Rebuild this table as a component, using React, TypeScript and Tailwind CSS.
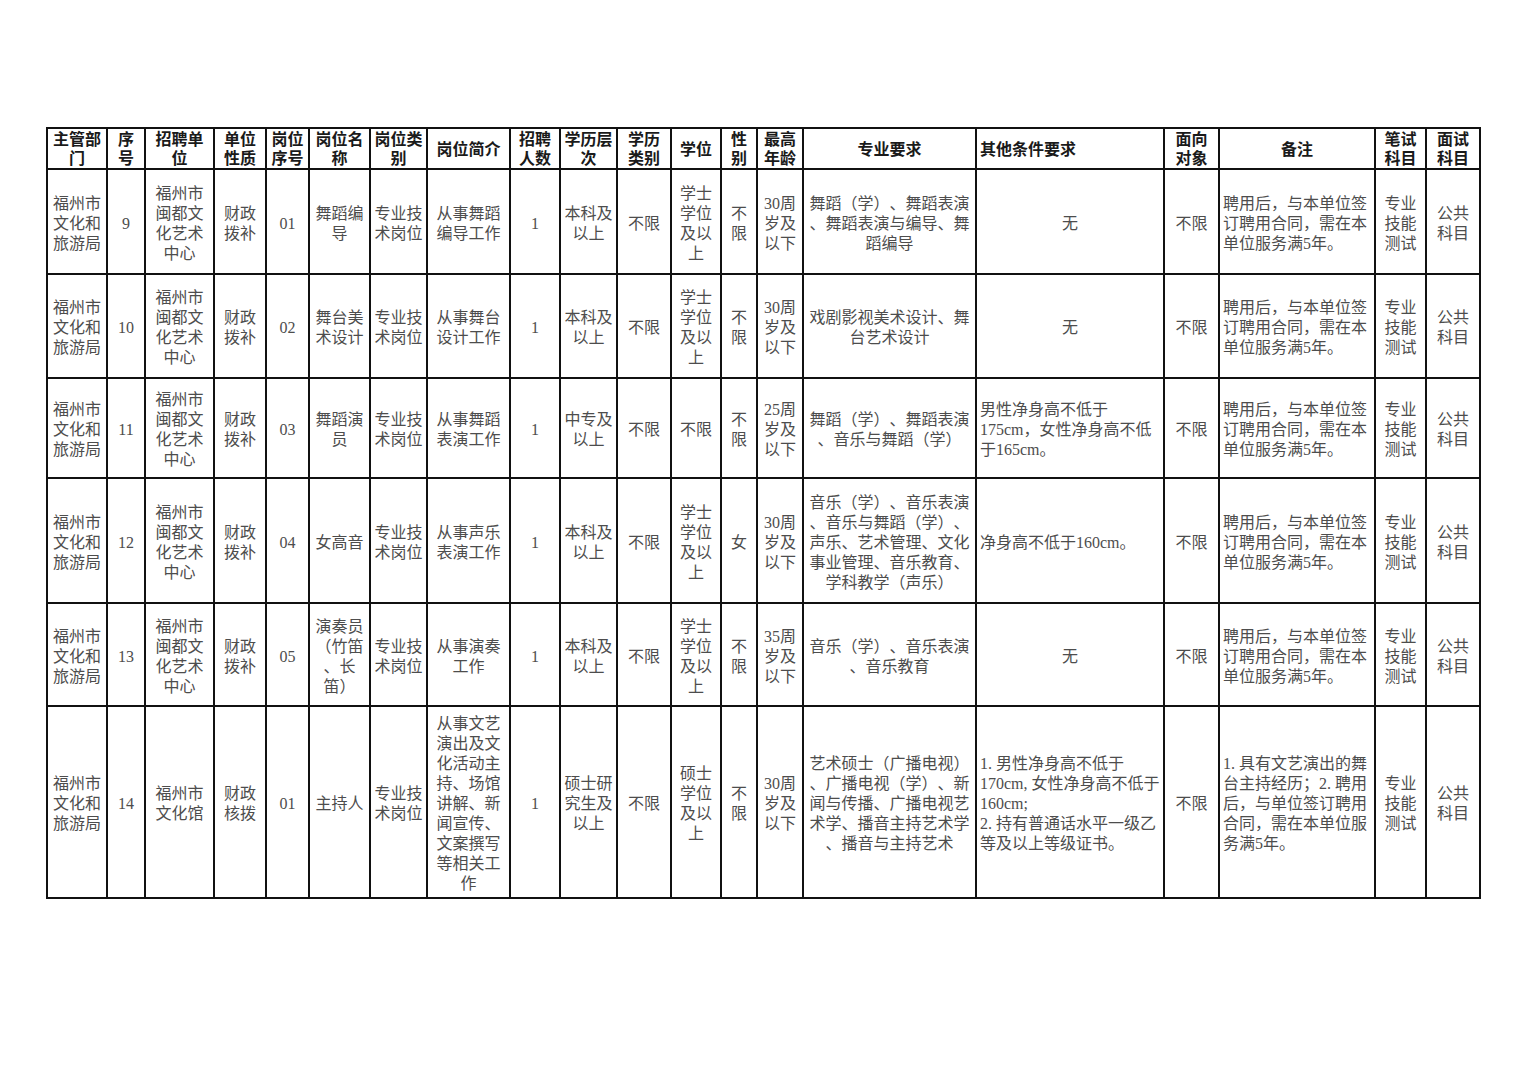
type Cell = { t: string[]; left?: boolean };

const widths = [60, 38, 69, 52, 43, 61, 57, 83, 50, 57, 54, 50, 36, 46, 173, 188, 55, 156, 51, 54];

const headers: Cell[] = [
  { t: ['主管部', '门'] },
  { t: ['序', '号'] },
  { t: ['招聘单', '位'] },
  { t: ['单位', '性质'] },
  { t: ['岗位', '序号'] },
  { t: ['岗位名', '称'] },
  { t: ['岗位类', '别'] },
  { t: ['岗位简介'] },
  { t: ['招聘', '人数'] },
  { t: ['学历层', '次'] },
  { t: ['学历', '类别'] },
  { t: ['学位'] },
  { t: ['性', '别'] },
  { t: ['最高', '年龄'] },
  { t: ['专业要求'] },
  { t: ['其他条件要求'], left: true },
  { t: ['面向', '对象'] },
  { t: ['备注'] },
  { t: ['笔试', '科目'] },
  { t: ['面试', '科目'] },
];

const dept = { t: ['福州市', '文化和', '旅游局'] };
const center = { t: ['福州市', '闽都文', '化艺术', '中心'] };
const bubu = { t: ['财政', '拨补'] };
const tech = { t: ['专业技', '术岗位'] };
const bachelor = { t: ['本科及', '以上'] };
const nolimit = { t: ['不限'] };
const degree = { t: ['学士', '学位', '及以', '上'] };
const sexAny = { t: ['不', '限'] };
const age30 = { t: ['30周', '岁及', '以下'] };
const remark = { t: ['聘用后，与本单位签', '订聘用合同，需在本', '单位服务满5年。'], left: true };
const written = { t: ['专业', '技能', '测试'] };
const oral = { t: ['公共', '科目'] };
const none = { t: ['无'] };

const rows: { h: string; cells: Cell[] }[] = [
  {
    h: 'h-[105px]',
    cells: [
      dept, { t: ['9'] }, center, bubu, { t: ['01'] }, { t: ['舞蹈编', '导'] }, tech,
      { t: ['从事舞蹈', '编导工作'] }, { t: ['1'] }, bachelor, nolimit, degree, sexAny, age30,
      { t: ['舞蹈（学）、舞蹈表演', '、舞蹈表演与编导、舞', '蹈编导'] }, none, nolimit, remark, written, oral,
    ],
  },
  {
    h: 'h-[104px]',
    cells: [
      dept, { t: ['10'] }, center, bubu, { t: ['02'] }, { t: ['舞台美', '术设计'] }, tech,
      { t: ['从事舞台', '设计工作'] }, { t: ['1'] }, bachelor, nolimit, degree, sexAny, age30,
      { t: ['戏剧影视美术设计、舞', '台艺术设计'] }, none, nolimit, remark, written, oral,
    ],
  },
  {
    h: 'h-[100px]',
    cells: [
      dept, { t: ['11'] }, center, bubu, { t: ['03'] }, { t: ['舞蹈演', '员'] }, tech,
      { t: ['从事舞蹈', '表演工作'] }, { t: ['1'] }, { t: ['中专及', '以上'] }, nolimit, nolimit, sexAny,
      { t: ['25周', '岁及', '以下'] },
      { t: ['舞蹈（学）、舞蹈表演', '、音乐与舞蹈（学）'] },
      { t: ['男性净身高不低于', '175cm，女性净身高不低', '于165cm。'], left: true },
      nolimit, remark, written, oral,
    ],
  },
  {
    h: 'h-[125px]',
    cells: [
      dept, { t: ['12'] }, center, bubu, { t: ['04'] }, { t: ['女高音'] }, tech,
      { t: ['从事声乐', '表演工作'] }, { t: ['1'] }, bachelor, nolimit, degree, { t: ['女'] }, age30,
      { t: ['音乐（学）、音乐表演', '、音乐与舞蹈（学）、', '声乐、艺术管理、文化', '事业管理、音乐教育、', '学科教学（声乐）'] },
      { t: ['净身高不低于160cm。'], left: true },
      nolimit, remark, written, oral,
    ],
  },
  {
    h: 'h-[103px]',
    cells: [
      dept, { t: ['13'] }, center, bubu, { t: ['05'] }, { t: ['演奏员', '（竹笛', '、长', '笛）'] }, tech,
      { t: ['从事演奏', '工作'] }, { t: ['1'] }, bachelor, nolimit, degree, sexAny,
      { t: ['35周', '岁及', '以下'] },
      { t: ['音乐（学）、音乐表演', '、音乐教育'] }, none, nolimit, remark, written, oral,
    ],
  },
  {
    h: 'h-[192px]',
    cells: [
      dept, { t: ['14'] }, { t: ['福州市', '文化馆'] }, { t: ['财政', '核拨'] }, { t: ['01'] }, { t: ['主持人'] }, tech,
      { t: ['从事文艺', '演出及文', '化活动主', '持、场馆', '讲解、新', '闻宣传、', '文案撰写', '等相关工', '作'] },
      { t: ['1'] }, { t: ['硕士研', '究生及', '以上'] }, nolimit, { t: ['硕士', '学位', '及以', '上'] }, sexAny, age30,
      { t: ['艺术硕士（广播电视）', '、广播电视（学）、新', '闻与传播、广播电视艺', '术学、播音主持艺术学', '、播音与主持艺术'] },
      { t: ['1. 男性净身高不低于', '170cm, 女性净身高不低于', '160cm;', '2. 持有普通话水平一级乙', '等及以上等级证书。'], left: true },
      nolimit,
      { t: ['1. 具有文艺演出的舞', '台主持经历；2. 聘用', '后，与单位签订聘用', '合同，需在本单位服', '务满5年。'], left: true },
      written, oral,
    ],
  },
];

function Lines({ c }: { c: Cell }) {
  return (
    <>
      {c.t.map((line, i) => (
        <div key={i} className="whitespace-nowrap">
          {line}
        </div>
      ))}
    </>
  );
}

export default function App() {
  return (
    <div
      className="min-h-[1080px] bg-white pt-[127px] pl-[46px] [text-spacing-trim:space-all]"
      style={{ fontFamily: '"Liberation Serif", "Noto Sans CJK SC", serif' }}
    >
      <table className="w-[1435px] table-fixed border-collapse">
        <colgroup>
          {widths.map((w, i) => (
            <col key={i} style={{ width: w }} />
          ))}
        </colgroup>
        <thead>
          <tr className="h-[41px]">
            {headers.map((c, i) => (
              <th
                key={i}
                className={`border-2 border-[#111] px-[3px] pt-[1px] pb-0 align-middle text-[16px] leading-[19px] font-bold text-[#1a1a1a] ${
                  c.left ? 'text-left' : 'text-center'
                }`}
              >
                <Lines c={c} />
              </th>
            ))}
          </tr>
        </thead>
        <tbody>
          {rows.map((r, ri) => (
            <tr key={ri} className={r.h}>
              {r.cells.map((c, ci) => (
                <td
                  key={ci}
                  className={`border-2 border-[#111] px-[3px] pt-[4px] pb-0 align-middle text-[16px] leading-[20px] text-[#4d4d4d] ${
                    c.left ? 'text-left' : 'text-center'
                  }`}
                >
                  <Lines c={c} />
                </td>
              ))}
            </tr>
          ))}
        </tbody>
      </table>
    </div>
  );
}
